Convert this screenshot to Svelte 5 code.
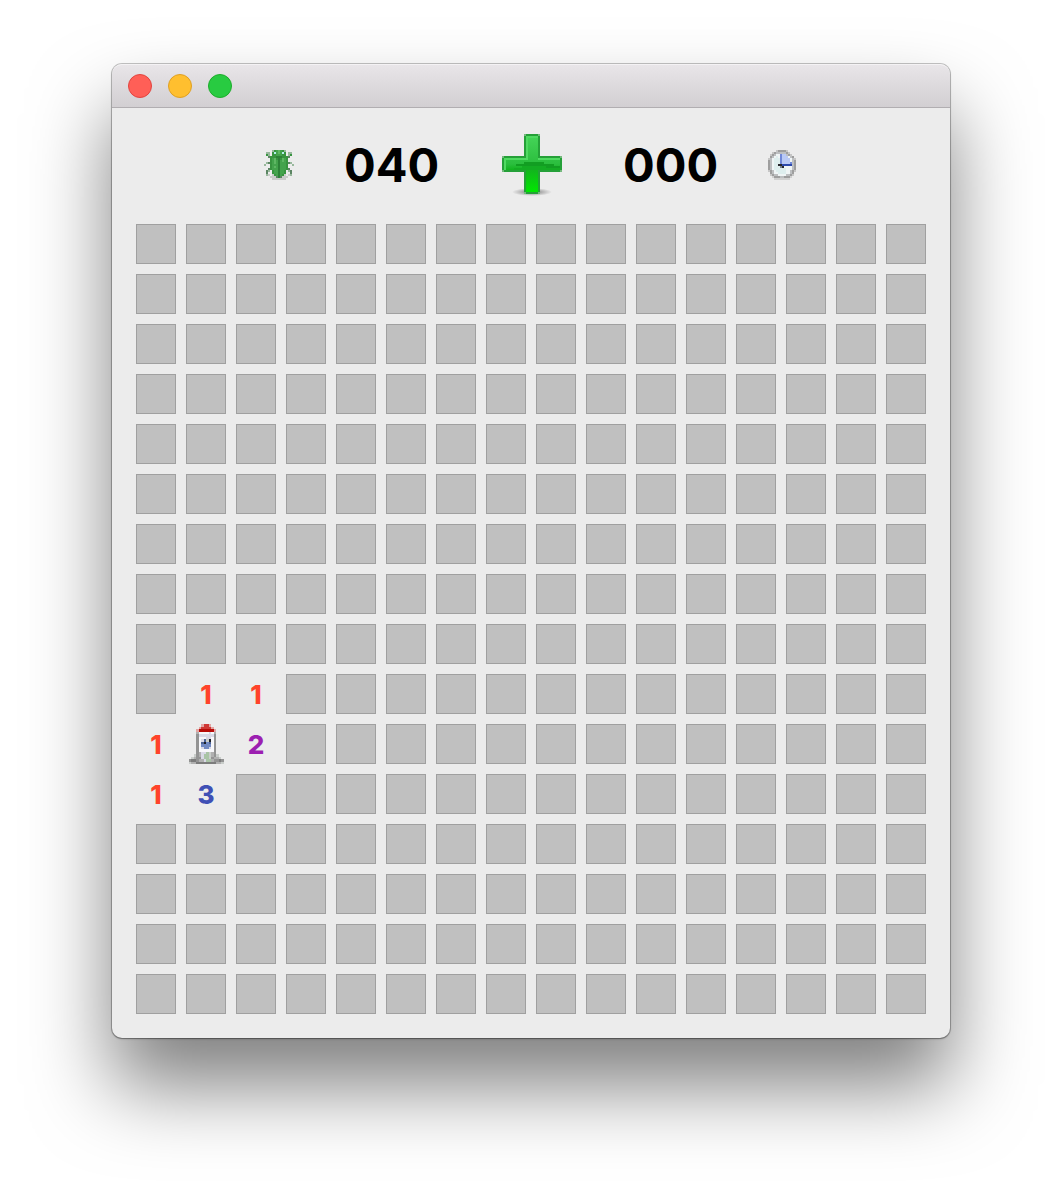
<script lang="ts">
  type Cell = { open: boolean; value: string };

  const ROWS = 16;
  const COLS = 16;

  // "#" is a covered cell, "@" the rocket, a digit the number of bugs around
  const opened: Record<number, string> = {
    9: '#11#############',
    10: '1@2#############',
    11: '13##############'
  };

  const board: Cell[][] = Array.from({ length: ROWS }, (_, r) =>
    [...(opened[r] ?? '#'.repeat(COLS))].map((value) => ({ open: value !== '#', value }))
  );

  let bugs = $state(40);
  let seconds = $state(0);

  const pad = (n: number) => String(n).padStart(3, '0');

  const bugSprite = {
    colors: {
      d: '#2c8137', g: '#37943f', L: '#43a34c', l: '#5eb763', e: '#b4ecee',
      k: '#5c8563', h: '#98b89c', s: '#c9cbc9'
    },
    rows: [
      '...............',
      '....hgLlLgh....',
      '.hh.geLlLeg.hh.',
      '.gh.ggLLLgg.hg.',
      '..kgggdddgggk..',
      '...gLlgdglLg...',
      '...gLlLdLlLg...',
      '.hkgLlLdLLLgkh.',
      'h..gLLLdLLLg..h',
      '...gLlLdLLLg...',
      '..kgLLLdLLLgk..',
      '.kh.gLLdLLg.hk.',
      '.k..gLLdLLg..k.',
      '.hs.sgLdLgs.sh.',
      '...ssskdksss...',
      '....sssssss....'
    ]
  };

  const clockSprite = {
    colors: {
      a: '#bdbfc1', m: '#9e9e9e', h: '#c6c6c6', w: '#f0f5f6', c: '#deeeee',
      b: '#b9c9f5', D: '#7088d8', B: '#2c49ad', k: '#26262c', K: '#77808c', s: '#d0d0d0'
    },
    rows: [
      '................',
      '.....hmmmmh.....',
      '...hmaaaaamh....',
      '..hmawwDbbamh...',
      '..mawcwDbbbwam..',
      '.hawcccDbbbbwah.',
      '.mawcccDbbbbwam.',
      '.mawcccDbbbbDam.',
      '.mawcckkBBBBBam.',
      '.mawcccKkwwwwam.',
      '.mawccccccwwwam.',
      '.hmawcccccwwamh.',
      '..mawwccccwwam..',
      '..hmaawwwwaamh..',
      '...smmmaammms...',
      '....ssssssss....'
    ]
  };

  const rocketSprite = {
    colors: {
      r: '#cf3835', R: '#b80c08', p: '#e3a5a3', a: '#b0b0b0', m: '#939393',
      w: '#f7f7fa', v: '#d9d9e6', g: '#c9cdca', G: '#a9c4a6', b: '#7189c2',
      n: '#4d6396', k: '#1c2027', d: '#7c7c7c'
    },
    rows: [
      '......prrp......',
      '.....prrrrp.....',
      '....pRRRRRRp....',
      '....awwwwvwa....',
      '....mvvvvvvm....',
      '....mwwwvvwm....',
      '....mwvngkwm....',
      '....mwnkbnwm....',
      '....mwbbbbwm....',
      '....mwvbbvwm....',
      '....mwwwwwwm....',
      '....mavvGgam....',
      '...gmavGGgamg...',
      '..gammvGGgmaag..',
      '.mddmaavGGammdm.',
      '.gaaddddddddaag.'
    ]
  };
</script>

{#snippet sprite(art: { colors: Record<string, string>; rows: string[] }, title: string)}
  <svg class="sprite" viewBox="0 0 16 16" role="img" aria-label={title}>
    {#each art.rows as row, y}
      {#each [...row] as key, x}
        {#if key !== '.'}
          <rect {x} {y} width="1" height="1" fill={art.colors[key]} />
        {/if}
      {/each}
    {/each}
  </svg>
{/snippet}

<main class="window">
  <div class="titlebar">
    <button class="light light--close" aria-label="Close"></button>
    <button class="light light--minimize" aria-label="Minimize"></button>
    <button class="light light--zoom" aria-label="Zoom"></button>
  </div>

  <header class="status">
    <span class="status__icon">{@render sprite(bugSprite, 'Bugs')}</span>
    <span class="status__counter">{pad(bugs)}</span>
    <button class="status__new" aria-label="New game" onclick={() => (seconds = 0)}>
      <svg viewBox="-1 0 64 64" aria-hidden="true">
        <defs>
          <linearGradient id="plus-fill" gradientUnits="userSpaceOnUse" x1="0" y1="4" x2="0" y2="60">
            <stop offset="0" stop-color="#45d458" />
            <stop offset="0.5" stop-color="#2bbe3e" />
            <stop offset="0.6" stop-color="#12b41e" />
            <stop offset="1" stop-color="#00e800" />
          </linearGradient>
          <radialGradient id="plus-shadow">
            <stop offset="0" stop-color="#000" stop-opacity="0.5" />
            <stop offset="1" stop-color="#000" stop-opacity="0" />
          </radialGradient>
        </defs>
        <ellipse cx="32" cy="60" rx="20" ry="4" fill="url(#plus-shadow)" />
        <g shape-rendering="crispEdges">
          <path d="M24 2H40V24H62V40H40V62H24V40H2V24H24Z" fill="#25a038" />
          <path d="M26 4H38V26H60V38H38V60H26V38H4V26H26Z" fill="url(#plus-fill)" />
          <path d="M26 4H38V6H28V28H6V38H4V26H26ZM38 26H60V28H38Z" fill="#4fda61" />
          <path d="M16 34V32H24V30H44V32H54V34H60V36H46V34H22V34Z" fill="#129e22" />
          <path d="M22 34H46V36H60V38H14V36H22Z" fill="#14ac23" />
          <path d="M24 2h2v2h-2zM38 2h2v2h-2zM2 24h2v2h-2zM60 24h2v2h-2zM2 38h2v2h-2zM60 38h2v2h-2zM24 60h2v2h-2zM38 60h2v2h-2z" fill="#74b97d" />
        </g>
      </svg>
    </button>
    <span class="status__counter">{pad(seconds)}</span>
    <span class="status__icon">{@render sprite(clockSprite, 'Time')}</span>
  </header>

  <div class="board">
    {#each board as row, r}
      {#each row as cell, c}
        {#if !cell.open}
          <button class="cell cell--covered" aria-label={`Row ${r + 1}, column ${c + 1}`}></button>
        {:else if cell.value === '@'}
          <span class="cell">{@render sprite(rocketSprite, 'Rocket')}</span>
        {:else}
          <span
            class="cell cell--number"
            class:cell--one={cell.value === '1'}
            class:cell--two={cell.value === '2'}
            class:cell--three={cell.value === '3'}>{cell.value}</span>
        {/if}
      {/each}
    {/each}
  </div>
</main>

<style>
  :global(body) {
    background: #fff;
  }

  .window {
    margin: 64px 112px 160px;
    border-radius: 10px;
    background: #ececec;
    box-shadow:
      0 0 0 1px rgba(0, 0, 0, 0.22),
      0 1px 2px rgba(0, 0, 0, 0.3),
      0 48px 80px rgba(0, 0, 0, 0.5);
    font-family: Inter, 'Liberation Sans', sans-serif;
  }

  .titlebar {
    display: flex;
    align-items: center;
    gap: 16px;
    box-sizing: border-box;
    height: 44px;
    padding: 0 16px;
    border-top: 1px solid #f4f2f4;
    border-bottom: 1px solid #b1aeb1;
    border-radius: 10px 10px 0 0;
    background: linear-gradient(#e8e5e8, #d2cfd2);
  }

  .light {
    width: 24px;
    height: 24px;
    padding: 0;
    border: 1px solid;
    border-radius: 50%;
  }

  .light--close {
    border-color: #e2443f;
    background: #ff5f57;
  }

  .light--minimize {
    border-color: #dfa023;
    background: #ffbf2f;
  }

  .light--zoom {
    border-color: #1dad2b;
    background: #28cb41;
  }

  .status {
    display: flex;
    align-items: center;
    justify-content: center;
    gap: 48px;
    padding: 24px 24px 28px;
  }

  .status__icon {
    width: 32px;
    height: 32px;
  }

  .status__counter {
    width: 95px;
    padding-top: 2px;
    font-size: 47px;
    font-weight: 700;
    line-height: 62px;
    text-align: center;
  }

  .status__new {
    height: 64px;
    padding: 0 12px;
    border: none;
    background: none;
    cursor: pointer;
  }

  .status__new svg {
    display: block;
    width: 64px;
    height: 64px;
  }

  .sprite {
    display: block;
    width: 100%;
    height: 100%;
    shape-rendering: crispEdges;
  }

  .board {
    display: grid;
    grid-template-columns: repeat(16, 1fr);
    gap: 10px;
    padding: 0 24px 24px;
  }

  .cell {
    display: flex;
    align-items: center;
    justify-content: center;
    box-sizing: border-box;
    aspect-ratio: 1;
  }

  .cell--covered {
    padding: 0;
    border: 1px solid #a0a0a0;
    background: #c0c0c0;
  }

  .cell--number {
    padding-top: 2px;
    font-size: 26px;
    font-weight: 800;
    line-height: 38px;
  }

  .cell--one { color: #ff432a; }
  .cell--two { color: #9c1fb1; }
  .cell--three { color: #3f50b5; }
</style>
